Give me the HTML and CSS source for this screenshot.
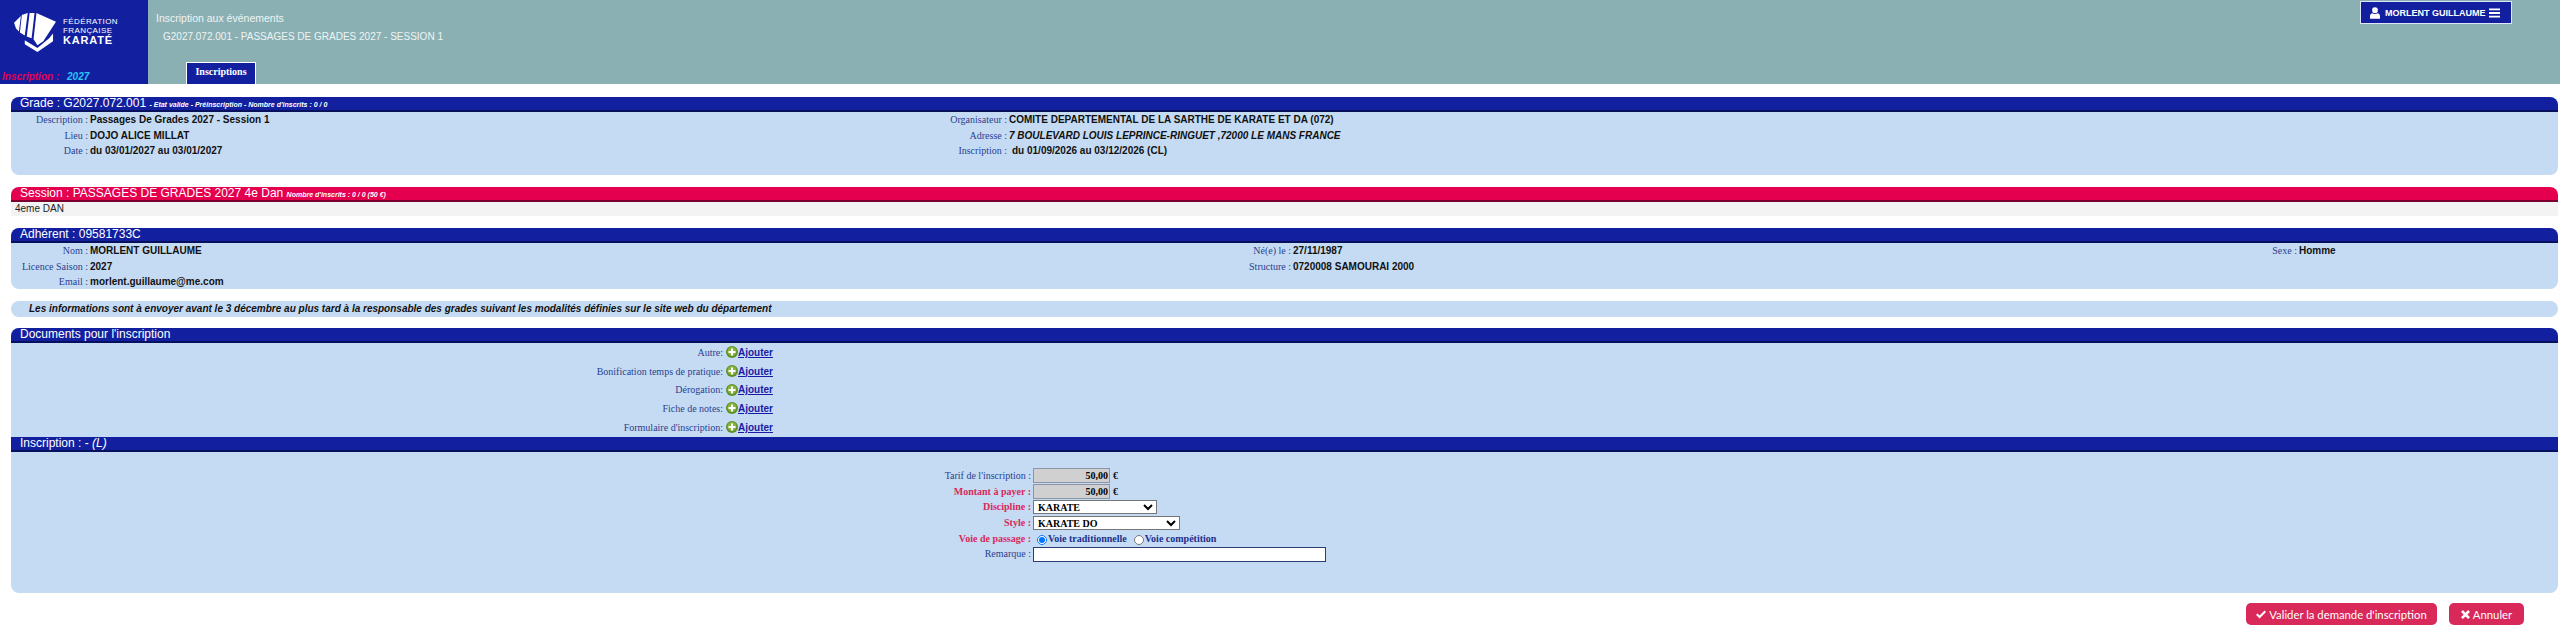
FILE: index.html
```html
<!DOCTYPE html>
<html>
<head>
    <meta charset="utf-8">
    <title>Inscription aux événements</title>
    <link rel="stylesheet" href="styles.css">
</head>
<body>
    <header class="top">
        <div class="brand">
            <div class="logo">
                <svg class="logo-mark" viewBox="0 0 44 40">
                    <path fill="#fff" d="M0 10 7 3 5 19 2 16ZM8 2 14 0 11 23 6 20ZM16 0 21 0 18 26 13 24ZM23 0 43 9 30 29 24 33 20 27Z"/>
                    <path fill="#fff" d="M11 28 24 36 36 26 40 21 40 29 24 40 11 32Z"/>
                </svg>
                <div class="logo-text">
                    <span>FÉDÉRATION</span>
                    <span>FRANÇAISE</span>
                    <strong>KARATÉ</strong>
                </div>
            </div>
            <div class="season"><span class="season-label">Inscription :</span> <span class="season-year">2027</span></div>
        </div>
        <div class="top-main">
            <div class="top-row">
                <div class="crumbs">
                    <div class="crumb-title">Inscription aux événements</div>
                    <div class="crumb-event">G2027.072.001 - PASSAGES DE GRADES 2027 - SESSION 1</div>
                </div>
                <div class="user-btn">
                    <svg class="user-icon" viewBox="0 0 12 14"><path fill="#fff" d="M6 0a3.4 3.4 0 0 1 3.4 3.6A3.4 3.4 0 0 1 6 7.2a3.4 3.4 0 0 1-3.4-3.6A3.4 3.4 0 0 1 6 0ZM2.6 7.2 6 8.4l3.4-1.2c1.6.4 2.6 1.8 2.6 3.8V14H0v-3c0-2 1-3.4 2.6-3.8Z"/></svg>
                    <span>MORLENT GUILLAUME</span>
                    <svg class="bars-icon" viewBox="0 0 12 10"><path fill="#fff" d="M0 0h12v2H0zM0 4h12v2H0zM0 8h12v2H0z"/></svg>
                </div>
            </div>
            <div class="tab">Inscriptions</div>
        </div>
    </header>

    <main class="content">
        <section class="panel panel-grade">
            <h2 class="panel-title">Grade : G2027.072.001 <small>- Etat valide - Préinscription - Nombre d'inscrits : 0 / 0</small></h2>
            <div class="info-grid">
                <span class="lbl">Description :</span><span class="val">Passages De Grades 2027 - Session 1</span>
                <span class="lbl">Organisateur :</span><span class="val">COMITE DEPARTEMENTAL DE LA SARTHE DE KARATE ET DA (072)</span>
                <span class="lbl">Lieu :</span><span class="val">DOJO ALICE MILLAT</span>
                <span class="lbl">Adresse :</span><span class="val val-italic">7 BOULEVARD LOUIS LEPRINCE-RINGUET ,72000 LE MANS FRANCE</span>
                <span class="lbl">Date :</span><span class="val">du 03/01/2027 au 03/01/2027</span>
                <span class="lbl">Inscription :</span><span class="val val-pad">du 01/09/2026 au 03/12/2026 (CL)</span>
            </div>
        </section>

        <section class="panel panel-session">
            <h2 class="panel-title title-pink">Session : PASSAGES DE GRADES 2027 4e Dan <small>Nombre d'inscrits : 0 / 0 (50 €)</small></h2>
            <div class="session-body">4eme DAN</div>
        </section>

        <section class="panel panel-member">
            <h2 class="panel-title">Adhérent : 09581733C</h2>
            <div class="info-grid">
                <span class="lbl">Nom :</span><span class="val">MORLENT GUILLAUME</span>
                <span class="lbl">Né(e) le :</span><span class="val">27/11/1987</span>
                <span class="lbl">Sexe :</span><span class="val">Homme</span>
                <span class="lbl">Licence Saison :</span><span class="val">2027</span>
                <span class="lbl">Structure :</span><span class="val">0720008 SAMOURAI 2000</span>
                <span></span><span></span>
                <span class="lbl">Email :</span><span class="val">morlent.guillaume@me.com</span>
            </div>
        </section>

        <div class="notice">Les informations sont à envoyer avant le 3 décembre au plus tard à la responsable des grades suivant les modalités définies sur le site web du département</div>

        <section class="panel panel-docs">
            <h2 class="panel-title">Documents pour l'inscription</h2>
            <div class="doc-list">
                <div class="doc-row"><span class="doc-lbl">Autre:</span><svg class="plus" viewBox="0 0 12 12"><circle cx="6" cy="6" r="6" fill="#5e8f2a"/><circle cx="6" cy="5.5" r="4.5" fill="#86b43c"/><path fill="#fff" d="M5 2.5h2V5h2.500v2H7v2.500H5V7H2.500V5H5z"/></svg><a class="add" href="#">Ajouter</a></div>
                <div class="doc-row"><span class="doc-lbl">Bonification temps de pratique:</span><svg class="plus" viewBox="0 0 12 12"><circle cx="6" cy="6" r="6" fill="#5e8f2a"/><circle cx="6" cy="5.5" r="4.5" fill="#86b43c"/><path fill="#fff" d="M5 2.5h2V5h2.500v2H7v2.500H5V7H2.500V5H5z"/></svg><a class="add" href="#">Ajouter</a></div>
                <div class="doc-row"><span class="doc-lbl">Dérogation:</span><svg class="plus" viewBox="0 0 12 12"><circle cx="6" cy="6" r="6" fill="#5e8f2a"/><circle cx="6" cy="5.5" r="4.5" fill="#86b43c"/><path fill="#fff" d="M5 2.5h2V5h2.500v2H7v2.500H5V7H2.500V5H5z"/></svg><a class="add" href="#">Ajouter</a></div>
                <div class="doc-row"><span class="doc-lbl">Fiche de notes:</span><svg class="plus" viewBox="0 0 12 12"><circle cx="6" cy="6" r="6" fill="#5e8f2a"/><circle cx="6" cy="5.5" r="4.5" fill="#86b43c"/><path fill="#fff" d="M5 2.5h2V5h2.500v2H7v2.500H5V7H2.500V5H5z"/></svg><a class="add" href="#">Ajouter</a></div>
                <div class="doc-row"><span class="doc-lbl">Formulaire d'inscription:</span><svg class="plus" viewBox="0 0 12 12"><circle cx="6" cy="6" r="6" fill="#5e8f2a"/><circle cx="6" cy="5.5" r="4.5" fill="#86b43c"/><path fill="#fff" d="M5 2.5h2V5h2.500v2H7v2.500H5V7H2.500V5H5z"/></svg><a class="add" href="#">Ajouter</a></div>
            </div>
        </section>

        <section class="panel panel-form">
            <h2 class="panel-title">Inscription : - <em>(L)</em></h2>
            <form class="form-grid">
                <label class="form-lbl">Tarif de l'inscription :</label>
                <div class="form-val"><input class="amount" type="text" value="50,00" readonly> <b>€</b></div>
                <label class="form-lbl req">Montant à payer :</label>
                <div class="form-val"><input class="amount" type="text" value="50,00" readonly> <b>€</b></div>
                <label class="form-lbl req">Discipline :</label>
                <div class="form-val"><select class="sel sel-discipline"><option>KARATE</option></select></div>
                <label class="form-lbl req">Style :</label>
                <div class="form-val"><select class="sel sel-style"><option>KARATE DO</option></select></div>
                <label class="form-lbl req">Voie de passage :</label>
                <div class="form-val radios">
                    <input type="radio" name="voie" checked><span>Voie traditionnelle</span>
                    <input class="radio-next" type="radio" name="voie"><span>Voie compétition</span>
                </div>
                <label class="form-lbl">Remarque :</label>
                <div class="form-val"><input class="remark" type="text"></div>
            </form>
        </section>

        <div class="actions">
            <button class="btn btn-valid" type="button">
                <svg class="btn-icon" viewBox="0 0 14 12"><path fill="#fff" d="M0 6.5 2 4.5 5 7.5 12 .5 14 2.5 5 11.5Z"/></svg>
                Valider la demande d'inscription
            </button>
            <button class="btn btn-cancel" type="button">
                <svg class="btn-icon btn-icon-x" viewBox="0 0 12 12"><path fill="#fff" d="M2.5 0 6 3.5 9.5 0 12 2.5 8.5 6 12 9.500 9.500 12 6 8.500 2.500 12 0 9.500 3.500 6 0 2.500Z"/></svg>
                Annuler
            </button>
        </div>
    </main>
</body>
</html>
```

FILE: styles.css
```css
body {
    margin: 0;
    background-color: white;
    font-family: "Liberation Sans", Arial, sans-serif;
    font-size: 10px;
    color: #111;
}

.top {
    display: flex;
    height: 84px;
    background-color: #8ab0b3;
}

.brand {
    width: 148px;
    background-color: #1220a0;
    display: flex;
    flex-direction: column;
    justify-content: space-between;
    box-sizing: border-box;
    padding: 13px 0 1px 2px;
}

.logo {
    display: flex;
    align-items: flex-start;
    gap: 6px;
    padding-left: 12px;
}

.logo-mark {
    width: 43px;
    height: 39px;
}

.logo-text {
    display: flex;
    flex-direction: column;
    padding-top: 4px;
    color: white;
    font-size: 8px;
    line-height: 9px;
    letter-spacing: 0.4px;
}

.logo-text strong {
    font-size: 11px;
    line-height: 11px;
    letter-spacing: 0.8px;
}

.season {
    font-weight: bold;
    font-style: italic;
    font-size: 10px;
    line-height: 13px;
}

.season-label {
    color: #e5004f;
}

.season-year {
    color: #29c5f6;
    margin-left: 5px;
}

.top-main {
    flex: 1;
    display: flex;
    flex-direction: column;
    justify-content: space-between;
}

.top-row {
    display: flex;
    justify-content: space-between;
    padding-right: 48px;
}

.crumbs {
    padding: 12px 0 0 8px;
    color: #eef4f4;
}

.crumb-title {
    font-size: 10.5px;
    line-height: 12px;
}

.crumb-event {
    font-size: 10px;
    line-height: 13px;
    margin: 6px 0 0 7px;
}

.user-btn {
    display: flex;
    align-items: center;
    box-sizing: border-box;
    width: 152px;
    height: 23px;
    margin-top: 1px;
    padding-left: 9px;
    gap: 5px;
    background-color: #1220a0;
    border: 1px solid #dfe6f5;
    color: white;
    font-size: 9px;
    font-weight: bold;
}

.user-icon {
    width: 10px;
    height: 12px;
}

.bars-icon {
    width: 11px;
    height: 10px;
    margin-left: -2px;
}

.tab {
    align-self: flex-start;
    margin-left: 38px;
    width: 70px;
    height: 22px;
    box-sizing: border-box;
    border: 1px solid white;
    border-bottom: none;
    background-color: #1220a0;
    color: white;
    font-family: "Liberation Serif", serif;
    font-weight: bold;
    font-size: 10px;
    line-height: 17px;
    text-align: center;
}

.content {
    padding: 13px 2px 0 11px;
}

.panel {
    background-color: #c5dbf4;
    border-radius: 8px;
    overflow: hidden;
}

.panel-title {
    margin: 0;
    height: 15px;
    box-sizing: border-box;
    padding-left: 9px;
    background-color: #1220a0;
    border-bottom: 2px solid #07105a;
    color: white;
    font-size: 12px;
    font-weight: normal;
    line-height: 13px;
    white-space: nowrap;
}

.panel-title small {
    font-size: 7px;
    font-weight: bold;
    font-style: italic;
}

.title-pink {
    background-color: #e5004f;
    border-bottom-color: #7a0030;
}

.info-grid {
    display: grid;
    grid-auto-rows: 15.6px;
    line-height: 15px;
}

.panel-grade {
    height: 78px;
}

.panel-grade .info-grid {
    grid-template-columns: 79px 800px 119px 1fr;
}

.panel-session {
    margin-top: 12px;
    height: 29px;
    background-color: #f3f3f3;
    border-radius: 8px 8px 0 0;
}

.session-body {
    padding-left: 4px;
    line-height: 14px;
    color: #222;
}

.panel-member {
    margin-top: 12px;
    height: 61px;
}

.panel-member .info-grid {
    grid-template-columns: 79px 1100px 103px 885px 121px 1fr;
    grid-auto-rows: 15.5px;
}

.lbl {
    font-family: "Liberation Serif", serif;
    text-align: right;
    color: #2a3f8f;
    padding-right: 2px;
}

.val {
    font-weight: bold;
    white-space: nowrap;
}

.val-italic {
    font-style: italic;
}

.val-pad {
    padding-left: 3px;
}

.notice {
    margin-top: 12px;
    height: 16px;
    line-height: 16px;
    background-color: #c5dbf4;
    border-radius: 8px;
    padding-left: 18px;
    font-weight: bold;
    font-style: italic;
}

.panel-docs {
    margin-top: 11px;
    height: 109px;
    border-radius: 8px 8px 0 0;
}

.doc-list {
    display: flex;
    flex-direction: column;
}

.doc-row {
    display: flex;
    align-items: center;
    height: 18.7px;
}

.doc-lbl {
    width: 712px;
    text-align: right;
    font-family: "Liberation Serif", serif;
    color: #2a3f8f;
}

.plus {
    width: 12px;
    height: 12px;
    margin-left: 3px;
}

.add {
    color: #1a1aa6;
    font-weight: bold;
}

.panel-form {
    height: 156px;
    border-radius: 0 0 8px 8px;
}

.form-grid {
    display: grid;
    grid-template-columns: 1022px 1fr;
    grid-auto-rows: 15.7px;
    padding-top: 16px;
    font-family: "Liberation Serif", serif;
}

.form-lbl {
    text-align: right;
    color: #2a3f8f;
    line-height: 15px;
    padding-right: 2px;
}

.form-lbl.req {
    color: #d9285a;
    font-weight: bold;
}

.form-val {
    display: flex;
    align-items: center;
    gap: 3px;
    font-weight: bold;
}

.amount {
    width: 77px;
    height: 15px;
    box-sizing: border-box;
    border: 1px solid #8a96a8;
    padding: 0 1px;
    background-color: #d0d0d0;
    text-align: right;
    font-family: "Liberation Serif", serif;
    font-weight: bold;
    font-size: 10px;
}

.sel {
    height: 14px;
    box-sizing: border-box;
    border: 1px solid #767676;
    padding: 0;
    background-color: white;
    font-family: "Liberation Serif", serif;
    font-weight: bold;
    font-size: 10px;
}

.sel-discipline {
    width: 124px;
}

.sel-style {
    width: 147px;
}

.radios {
    gap: 1px;
    color: #1d2f8a;
}

.radios input {
    width: 10px;
    height: 10px;
    margin: 2px 0 0 4px;
}

.radios .radio-next {
    margin-left: 6px;
}

.remark {
    width: 293px;
    height: 15px;
    box-sizing: border-box;
    border: 1px solid #2a3f6f;
    background-color: white;
    padding: 0 2px;
}

.actions {
    display: flex;
    justify-content: flex-end;
    gap: 12px;
    margin-top: 10px;
    padding-right: 34px;
}

.btn {
    display: flex;
    align-items: center;
    justify-content: center;
    gap: 3px;
    height: 22px;
    box-sizing: border-box;
    padding: 0;
    background-color: #d9285a;
    border: none;
    border-radius: 5px;
    color: white;
    font-family: Lato, "Liberation Sans", sans-serif;
    font-size: 11.3px;
}

.btn-valid {
    width: 191px;
}

.btn-cancel {
    width: 75px;
}

.btn-icon {
    width: 10px;
    height: 9px;
}

.btn-icon-x {
    width: 9px;
}
```
